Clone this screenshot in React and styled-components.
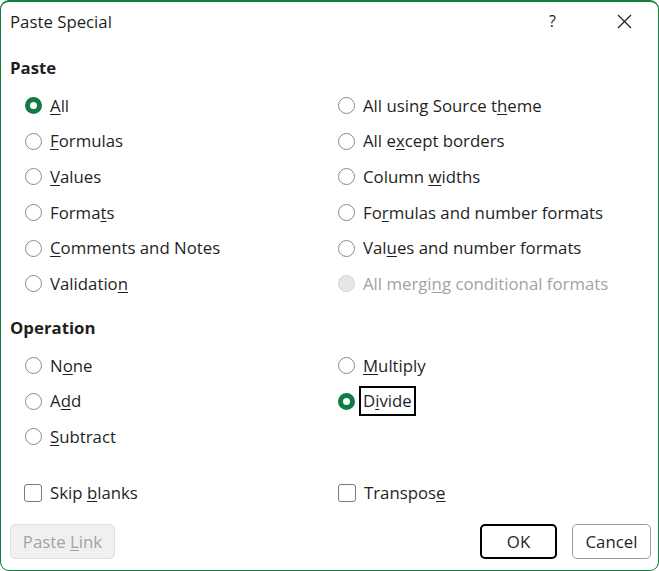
import React from "react";
import styled, { createGlobalStyle } from "styled-components";

const GlobalStyle = createGlobalStyle`
  html, body {
    margin: 0;
    padding: 0;
    background: #ffffff;
  }
  body {
    font-family: "Open Sans", "Noto Sans", sans-serif;
    color: #1f1f1f;
  }
`;

const pasteOptions = [
  { label: "All", hot: 0, checked: true },
  { label: "All using Source theme", hot: 18 },
  { label: "Formulas", hot: 0 },
  { label: "All except borders", hot: 5 },
  { label: "Values", hot: 0 },
  { label: "Column widths", hot: 7 },
  { label: "Formats", hot: 5 },
  { label: "Formulas and number formats", hot: 2 },
  { label: "Comments and Notes", hot: 0 },
  { label: "Values and number formats", hot: 3 },
  { label: "Validation", hot: 9 },
  { label: "All merging conditional formats", hot: 9, disabled: true },
];

const operationOptions = [
  { label: "None", hot: 1 },
  { label: "Multiply", hot: 0 },
  { label: "Add", hot: 1 },
  { label: "Divide", hot: 1, checked: true, focused: true },
  { label: "Subtract", hot: 0 },
];

const HotLabel = ({ text, hot }) => (
  <span>
    {text.slice(0, hot)}
    <u>{text[hot]}</u>
    {text.slice(hot + 1)}
  </span>
);

const RadioOption = ({ label, hot, checked, disabled, focused }) => (
  <Option $disabled={disabled}>
    <Circle $checked={checked} $disabled={disabled} />
    <OptionText $focused={focused}>
      <HotLabel text={label} hot={hot} />
    </OptionText>
  </Option>
);

const CloseIcon = () => (
  <svg width="15" height="15" viewBox="0 0 15 15">
    <path d="M1 1 L14 14 M14 1 L1 14" stroke="#1f1f1f" strokeWidth="1.2" fill="none" />
  </svg>
);

export default function App() {
  return (
    <>
      <GlobalStyle />
      <Dialog>
        <TitleBar>
          <Title>Paste Special</Title>
          <TitleActions>
            <HelpMark>?</HelpMark>
            <CloseButton>
              <CloseIcon />
            </CloseButton>
          </TitleActions>
        </TitleBar>

        <Heading $top={10}>Paste</Heading>
        <OptionGrid>
          {pasteOptions.map((o) => (
            <RadioOption key={o.label} {...o} />
          ))}
        </OptionGrid>

        <Heading $top={12.4}>Operation</Heading>
        <OptionGrid>
          {operationOptions.map((o) => (
            <RadioOption key={o.label} {...o} />
          ))}
        </OptionGrid>

        <CheckRow>
          <Option>
            <Box />
            <CheckText>
              <HotLabel text="Skip blanks" hot={5} />
            </CheckText>
          </Option>
          <Option>
            <Box />
            <CheckText>
              <HotLabel text="Transpose" hot={8} />
            </CheckText>
          </Option>
        </CheckRow>

        <Footer>
          <Button $disabled $width={105}>
            <HotLabel text="Paste Link" hot={6} />
          </Button>
          <ButtonGroup>
            <Button $primary $width={77}>OK</Button>
            <Button $width={79}>Cancel</Button>
          </ButtonGroup>
        </Footer>
      </Dialog>
    </>
  );
}

const Dialog = styled.div`
  width: 659px;
  height: 571px;
  box-sizing: border-box;
  border: 1px solid #107c41;
  border-top-width: 2px;
  border-radius: 9px;
  background: #ffffff;
  display: flex;
  flex-direction: column;
  font-size: 16.8px;
  overflow: hidden;
`;

const TitleBar = styled.div`
  height: 42px;
  box-sizing: border-box;
  padding: 0 26px 4px 9px;
  display: flex;
  align-items: center;
  justify-content: space-between;
`;

const Title = styled.div`
  font-size: 16.8px;
  color: #1f1f1f;
`;

const TitleActions = styled.div`
  display: flex;
  align-items: center;
  gap: 61px;
`;

const HelpMark = styled.span`
  font-size: 16px;
  color: #1f1f1f;
`;

const CloseButton = styled.span`
  display: flex;
  align-items: center;
`;

const Heading = styled.div`
  margin-top: ${(p) => p.$top}px;
  height: 28px;
  line-height: 28px;
  padding-left: 9px;
  font-weight: 700;
  color: #1f1f1f;
`;

const OptionGrid = styled.div`
  margin-top: 6px;
  padding-left: 24px;
  display: grid;
  grid-template-columns: 313px 1fr;
  grid-auto-rows: 35.6px;
`;

const Option = styled.div`
  display: flex;
  align-items: center;
  color: ${(p) => (p.$disabled ? "#a3a3a3" : "#1f1f1f")};
`;

const Circle = styled.span`
  width: 17px;
  height: 17px;
  box-sizing: border-box;
  border-radius: 50%;
  flex: none;
  margin-right: 8px;
  background: ${(p) => (p.$disabled ? "#e6e6e6" : "#ffffff")};
  border: ${(p) =>
    p.$checked
      ? "5px solid #107c41"
      : p.$disabled
      ? "1.5px solid #d4d4d4"
      : "1.5px solid #8a8a8a"};
`;

const OptionText = styled.span`
  line-height: 24px;
  padding: 0 1px;
  margin-left: -1px;
  outline: ${(p) => (p.$focused ? "2px solid #000000" : "none")};
  outline-offset: 1px;
  white-space: nowrap;

  u {
    text-underline-offset: 2px;
  }
`;

const CheckRow = styled.div`
  margin-top: 20.4px;
  height: 35.6px;
  padding-left: 23px;
  display: grid;
  grid-template-columns: 314px 1fr;
`;

const Box = styled.span`
  width: 18px;
  height: 18px;
  box-sizing: border-box;
  border: 1.5px solid #7a7a7a;
  border-radius: 3px;
  flex: none;
  margin-right: 8px;
`;

const CheckText = styled.span`
  white-space: nowrap;

  u {
    text-underline-offset: 2px;
  }
`;

const Footer = styled.div`
  margin-top: 13.2px;
  padding: 0 7px 0 9px;
  display: flex;
  justify-content: space-between;
  align-items: center;
`;

const ButtonGroup = styled.div`
  display: flex;
  gap: 15px;
`;

const Button = styled.div`
  width: ${(p) => p.$width}px;
  height: 35px;
  box-sizing: border-box;
  display: flex;
  align-items: center;
  justify-content: center;
  border-radius: 5px;
  font-size: 16.8px;
  color: ${(p) => (p.$disabled ? "#a3a3a3" : "#1f1f1f")};
  background: ${(p) => (p.$disabled ? "#f0f0f0" : "#ffffff")};
  border: ${(p) =>
    p.$primary
      ? "2px solid #000000"
      : p.$disabled
      ? "1px solid #e0e0e0"
      : "1px solid #9a9a9a"};

  u {
    text-underline-offset: 2px;
  }
`;
